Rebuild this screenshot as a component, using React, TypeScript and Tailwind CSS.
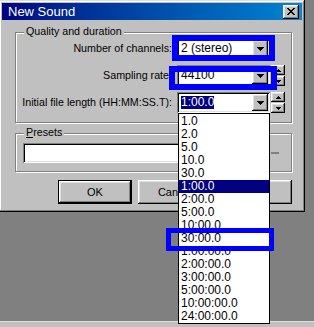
import React from "react";

const items = [
  "1.0",
  "2.0",
  "5.0",
  "10.0",
  "30.0",
  "1:00.0",
  "2:00.0",
  "5:00.0",
  "10:00.0",
  "30:00.0",
  "1:00:00.0",
  "2:00:00.0",
  "3:00:00.0",
  "5:00:00.0",
  "10:00:00.0",
  "24:00:00.0",
];

const raised =
  "bg-[#c0c0c0] shadow-[inset_-1px_-1px_#000,inset_1px_1px_#fff,inset_-2px_-2px_#808080,inset_2px_2px_#dfdfdf]";
const sunken =
  "bg-white shadow-[inset_1px_1px_#808080,inset_-1px_-1px_#fff,inset_2px_2px_#000,inset_-2px_-2px_#dfdfdf]";

function DownArrow() {
  return (
    <svg width="7" height="4" viewBox="0 0 7 4" shapeRendering="crispEdges">
      <path d="M0 0h7v1H0zM1 1h5v1H1zM2 2h3v1H2zM3 3h1v1H3z" fill="#000" />
    </svg>
  );
}

function SmallArrow({ up }: { up?: boolean }) {
  return (
    <svg width="5" height="3" viewBox="0 0 5 3" shapeRendering="crispEdges">
      {up ? (
        <path d="M2 0h1v1H2zM1 1h3v1H1zM0 2h5v1H0z" fill="#000" />
      ) : (
        <path d="M0 0h5v1H0zM1 1h3v1H1zM2 2h1v1H2z" fill="#000" />
      )}
    </svg>
  );
}

function Combo({ children }: { children: React.ReactNode }) {
  return (
    <div className={`ml-[5px] w-[93px] h-[21px] flex p-[2px] ${sunken}`}>
      <div className="flex-1 flex items-center pl-[2px] text-[12px] leading-[13px] text-black">
        {children}
      </div>
      <div className={`w-[16px] h-[17px] flex items-center justify-center ${raised}`}>
        <DownArrow />
      </div>
    </div>
  );
}

function Spinner() {
  return (
    <div className="ml-[1px] w-[14px] h-[21px] flex flex-col gap-[1px]">
      <div className={`h-[10px] flex items-center justify-center ${raised}`}>
        <SmallArrow up />
      </div>
      <div className={`h-[10px] flex items-center justify-center ${raised}`}>
        <SmallArrow />
      </div>
    </div>
  );
}

function Row({
  label,
  children,
  spin,
}: {
  label: string;
  children: React.ReactNode;
  spin?: boolean;
}) {
  return (
    <div className="flex items-center h-[21px]">
      <div className="w-[156px] text-right text-[10.7px] leading-[13px] text-black whitespace-nowrap">
        {label}
      </div>
      <Combo>{children}</Combo>
      {spin && <Spinner />}
    </div>
  );
}

export default function App() {
  return (
    <div className="relative w-[314px] h-[327px] overflow-hidden bg-[#808080] flex flex-col font-['Liberation_Sans',Arial,sans-serif]">
      {/* Dialog */}
      <div className="-ml-px w-[306px] h-[212px] bg-[#c0c0c0] flex flex-col shadow-[inset_-1px_-1px_#000,inset_1px_1px_#dfdfdf,inset_-2px_-2px_#808080,inset_2px_2px_#fff]">
        {/* Title bar */}
        <div className="mx-[3px] mt-[3px] h-[17px] flex items-center bg-gradient-to-r from-[#000080] to-[#1084d0]">
          <span className="pl-[6px] text-white text-[13px] leading-[17px] flex-1">
            New Sound
          </span>
          <div className={`mr-[3px] w-[16px] h-[14px] flex items-center justify-center ${raised}`}>
            <svg width="8" height="7" viewBox="0 0 8 7" shapeRendering="crispEdges">
              <path
                d="M0 0h2v1H0zM6 0h2v1H6zM1 1h2v1H1zM5 1h2v1H5zM2 2h4v1H2zM3 3h2v1H3zM2 4h4v1H2zM1 5h2v1H1zM5 5h2v1H5zM0 6h2v1H0zM6 6h2v1H6z"
                fill="#000"
              />
            </svg>
          </div>
        </div>

        {/* Quality and duration */}
        <div className="relative ml-[16px] mt-[12px] w-[277px] h-[91px] border border-[#808080] shadow-[inset_1px_1px_#fff,1px_1px_#fff]">
          <span className="absolute left-[8px] top-[-8px] px-[2px] bg-[#c0c0c0] text-[10.7px] leading-[13px] text-black whitespace-nowrap">
            Quality and duration
          </span>
          <div className="pt-[5px] flex flex-col gap-[6px]">
            <Row label="Number of channels:">2 (stereo)</Row>
            <Row label="Sampling rate:" spin>
              44100
            </Row>
            <Row label="Initial file length (HH:MM:SS.T):" spin>
              <span className="bg-[#000080] text-white">1:00.0</span>
            </Row>
          </div>
        </div>

        {/* Presets */}
        <div className="relative ml-[16px] mt-[10px] w-[277px] h-[39px] border border-[#808080] shadow-[inset_1px_1px_#fff,1px_1px_#fff]">
          <span className="absolute left-[8px] top-[-8px] px-[2px] bg-[#c0c0c0] text-[10.7px] leading-[13px] text-black whitespace-nowrap">
            <span className="underline">P</span>resets
          </span>
          <div className="flex items-center mt-[9px] ml-[7px]">
            <div className={`w-[240px] h-[20px] ${sunken}`} />
            <div className="ml-[8px] w-[8px] h-[2px] bg-[#808080]" />
          </div>
        </div>

        {/* Buttons */}
        <div className="flex ml-[59px] mt-[8px] gap-[6px]">
          <div className="w-[74px] h-[24px] border border-black">
            <div className={`w-full h-full flex items-center justify-center text-[11px] text-black ${raised}`}>
              OK
            </div>
          </div>
          <div className={`w-[74px] h-[24px] flex items-center justify-center text-[11px] text-black ${raised}`}>
            Cancel
          </div>
          <div className={`w-[74px] h-[24px] flex items-center justify-center text-[11px] text-black ${raised}`}>
            Help
          </div>
        </div>
      </div>

      <div className="flex-1" />
      {/* Bottom strip (window behind) */}
      <div className="h-[6px] bg-[#c0c0c0] border-t border-[#dfdfdf]" />

      {/* Dropdown list */}
      <div className="absolute left-[178px] top-[113px] w-[92px] h-[211px] bg-white border border-black pt-[1px]">
        {items.map((t, i) => (
          <div
            key={t}
            className={`h-[13px] pl-[2px] text-[12px] leading-[13px] whitespace-nowrap ${
              i === 5 ? "bg-[#000080] text-white" : "text-black"
            }`}
          >
            {t}
          </div>
        ))}
      </div>

      {/* Blue annotation rectangles */}
      <div className="absolute left-[172px] top-[35px] w-[103px] h-[26px] border-[6px] border-[#0000ff]" />
      <div className="absolute left-[169px] top-[66px] w-[108px] h-[24px] border-[6px] border-[#0000ff]" />
      <div className="absolute left-[166px] top-[228px] w-[108px] h-[23px] border-[5px] border-[#0000ff]" />
    </div>
  );
}
